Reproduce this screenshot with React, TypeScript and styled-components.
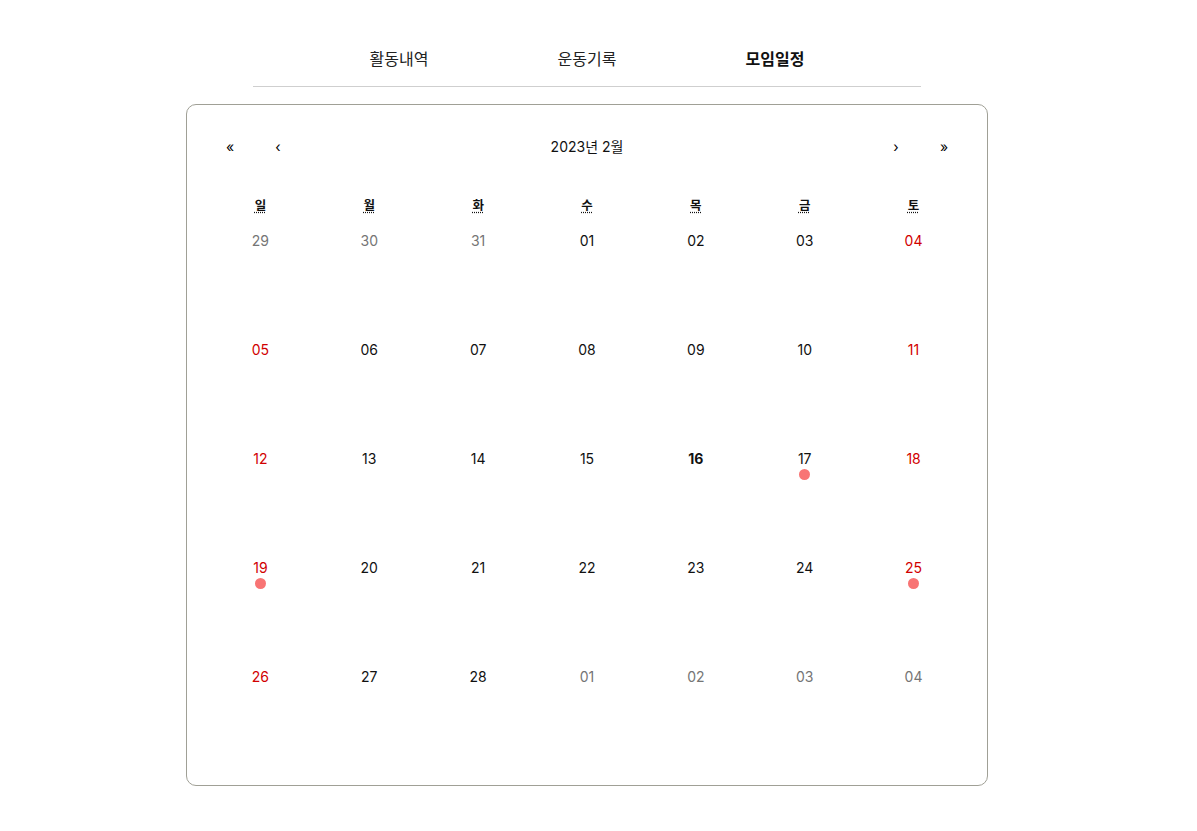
import React from "react";
import styled, { createGlobalStyle } from "styled-components";

const Global = createGlobalStyle`
  * { box-sizing: border-box; }
  body {
    margin: 0;
    background: #ffffff;
    font-family: Inter, "Noto Sans CJK KR", "Noto Sans", sans-serif;
    color: #111;
  }
`;

const Page = styled.div`
  display: flex;
  flex-direction: column;
  align-items: center;
  padding-top: 46px;
  padding-right: 23px;
`;

const Tabs = styled.nav`
  width: 668px;
  display: flex;
  justify-content: center;
  border-bottom: 1px solid #cfcfcf;
  padding-bottom: 16px;
`;

const Tab = styled.div<{ $active?: boolean }>`
  width: 188px;
  text-align: center;
  font-size: 16px;
  line-height: 24px;
  font-weight: ${(p) => (p.$active ? 700 : 400)};
  color: ${(p) => (p.$active ? "#111" : "#222")};
  font-family: "Noto Sans CJK KR", sans-serif;
`;

const Card = styled.section`
  margin-top: 17px;
  width: 802px;
  height: 682px;
  border: 1px solid #a0a096;
  border-radius: 10px;
  padding: 19px 19px 0;
`;

const Nav = styled.div`
  display: flex;
  align-items: center;
  height: 44px;
  margin-bottom: 21px;
`;

const NavButton = styled.button`
  min-width: 48px;
  height: 44px;
  background: none;
  border: 0;
  padding: 0;
  font-family: Inter, sans-serif;
  font-size: 14px;
  color: #000;
  cursor: pointer;
`;

const NavLabel = styled.button`
  flex: 1;
  height: 44px;
  background: none;
  border: 0;
  font-family: Inter, "Noto Sans CJK KR", sans-serif;
  font-size: 14px;
  color: #111;
`;

const Grid = styled.div`
  display: grid;
  grid-template-columns: repeat(7, 1fr);
`;

const Weekday = styled.div`
  height: 30px;
  display: flex;
  align-items: center;
  justify-content: center;
  font-size: 12.5px;
  font-weight: 700;
  font-family: "Noto Sans CJK KR", sans-serif;
  abbr {
    text-decoration: underline dotted;
    text-underline-offset: 2px;
    cursor: help;
  }
`;

type Kind = "normal" | "weekend" | "neighbor";

const Tile = styled.div<{ $kind: Kind; $today?: boolean }>`
  height: 109px;
  padding-top: 12px;
  display: flex;
  flex-direction: column;
  align-items: center;
  font-size: 14px;
  line-height: 20px;
  font-weight: ${(p) => (p.$today ? 700 : 400)};
  color: ${(p) =>
    p.$kind === "weekend" ? "#d10000" : p.$kind === "neighbor" ? "#757575" : "#111"};
`;

const Dot = styled.span`
  margin-top: 0;
  width: 11px;
  height: 11px;
  border-radius: 50%;
  background: #f87474;
`;

type Day = { n: string; kind: Kind; today?: boolean; dot?: boolean };

const weeks: Day[][] = [
  [
    { n: "29", kind: "neighbor" },
    { n: "30", kind: "neighbor" },
    { n: "31", kind: "neighbor" },
    { n: "01", kind: "normal" },
    { n: "02", kind: "normal" },
    { n: "03", kind: "normal" },
    { n: "04", kind: "weekend" },
  ],
  [
    { n: "05", kind: "weekend" },
    { n: "06", kind: "normal" },
    { n: "07", kind: "normal" },
    { n: "08", kind: "normal" },
    { n: "09", kind: "normal" },
    { n: "10", kind: "normal" },
    { n: "11", kind: "weekend" },
  ],
  [
    { n: "12", kind: "weekend" },
    { n: "13", kind: "normal" },
    { n: "14", kind: "normal" },
    { n: "15", kind: "normal" },
    { n: "16", kind: "normal", today: true },
    { n: "17", kind: "normal", dot: true },
    { n: "18", kind: "weekend" },
  ],
  [
    { n: "19", kind: "weekend", dot: true },
    { n: "20", kind: "normal" },
    { n: "21", kind: "normal" },
    { n: "22", kind: "normal" },
    { n: "23", kind: "normal" },
    { n: "24", kind: "normal" },
    { n: "25", kind: "weekend", dot: true },
  ],
  [
    { n: "26", kind: "weekend" },
    { n: "27", kind: "normal" },
    { n: "28", kind: "normal" },
    { n: "01", kind: "neighbor" },
    { n: "02", kind: "neighbor" },
    { n: "03", kind: "neighbor" },
    { n: "04", kind: "neighbor" },
  ],
];

const weekdays = [
  ["일", "일요일"],
  ["월", "월요일"],
  ["화", "화요일"],
  ["수", "수요일"],
  ["목", "목요일"],
  ["금", "금요일"],
  ["토", "토요일"],
];

export default function App() {
  return (
    <>
      <Global />
      <Page>
        <Tabs>
          <Tab>활동내역</Tab>
          <Tab>운동기록</Tab>
          <Tab $active>모임일정</Tab>
        </Tabs>
        <Card>
          <Nav>
            <NavButton>«</NavButton>
            <NavButton>‹</NavButton>
            <NavLabel>2023년 2월</NavLabel>
            <NavButton>›</NavButton>
            <NavButton>»</NavButton>
          </Nav>
          <Grid>
            {weekdays.map(([s, t]) => (
              <Weekday key={t}>
                <abbr title={t}>{s}</abbr>
              </Weekday>
            ))}
            {weeks.flat().map((d, i) => (
              <Tile key={i} $kind={d.kind} $today={d.today}>
                {d.n}
                {d.dot && <Dot />}
              </Tile>
            ))}
          </Grid>
        </Card>
      </Page>
    </>
  );
}
